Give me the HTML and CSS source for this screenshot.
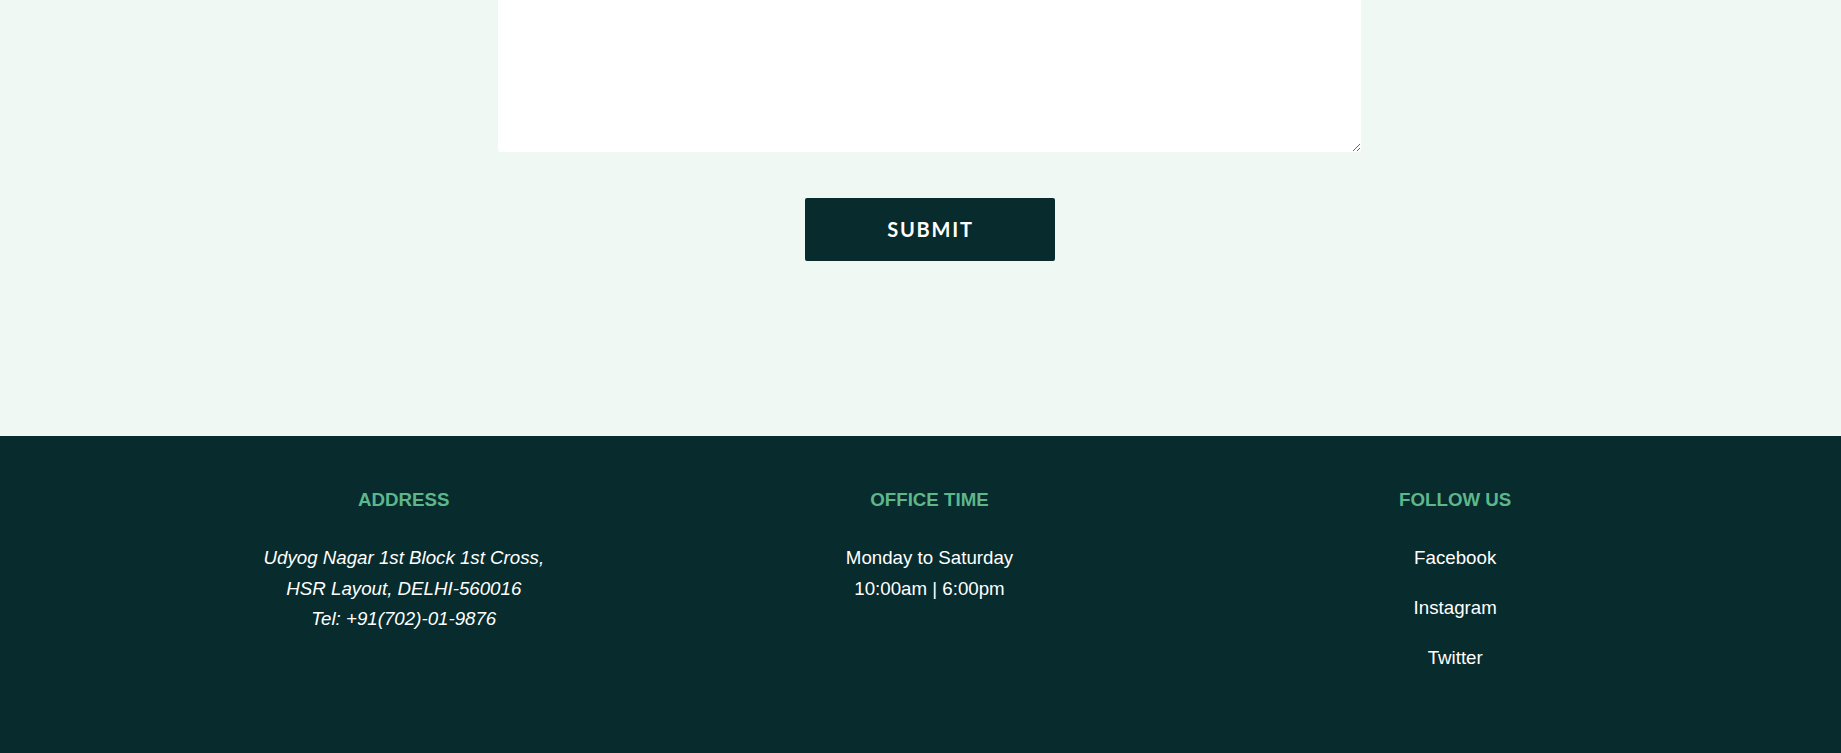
FILE: index.html
```html
<!DOCTYPE html>
<html lang="en">
<head>
<meta charset="utf-8">
<title>Contact</title>
<link rel="stylesheet" href="styles.css">
</head>
<body>
<div class="page">
  <section class="contact">
    <form class="form">
      <textarea class="message" name="message"></textarea>
      <button type="button" class="submit">SUBMIT</button>
    </form>
  </section>
  <footer class="footer">
    <div class="cols">
      <div class="col">
        <h3 class="col-title">ADDRESS</h3>
        <p class="lines address">Udyog Nagar 1st Block 1st Cross,<br>HSR Layout, DELHI-560016<br>Tel: +91(702)-01-9876</p>
      </div>
      <div class="col">
        <h3 class="col-title">OFFICE TIME</h3>
        <p class="lines">Monday to Saturday<br>10:00am | 6:00pm</p>
      </div>
      <div class="col">
        <h3 class="col-title">FOLLOW US</h3>
        <ul class="links">
          <li><a href="#" class="link">Facebook</a></li>
          <li><a href="#" class="link">Instagram</a></li>
          <li><a href="#" class="link">Twitter</a></li>
        </ul>
      </div>
    </div>
  </footer>
</div>
</body>
</html>
```

FILE: styles.css
```css
* { box-sizing: border-box; }

html, body {
  margin: 0;
  padding: 0;
  background: #082b2d;
  font-family: "Liberation Sans", Arial, sans-serif;
}

.page {
  display: flex;
  flex-direction: column;
  min-height: 100vh;
}

.contact {
  background: #eff8f3;
  padding: 0 0 175px 18px;
}

.form {
  display: flex;
  flex-direction: column;
  align-items: center;
}

.message {
  display: block;
  width: 863px;
  height: 152px;
  border: none;
  background: #ffffff;
  border-radius: 0 0 3px 3px;
  margin: 0;
  padding: 10px;
  font: 16px "Liberation Sans", Arial, sans-serif;
}

.submit {
  margin-top: 46px;
  width: 250px;
  height: 63px;
  border: none;
  border-radius: 2px;
  background: #082b2d;
  color: #ffffff;
  font-family: Lato, "Noto Sans", sans-serif;
  font-weight: 700;
  font-size: 20px;
  letter-spacing: 1.8px;
  padding: 0 0 2px 2px;
  cursor: pointer;
}

.footer {
  flex: 1;
  background: #082b2d;
  padding: 53px 0 80px 18px;
}

.cols {
  width: 1577px;
  margin: 0 auto;
  display: grid;
  grid-template-columns: repeat(3, 1fr);
  text-align: center;
}

.col-title {
  margin: 0;
  font-size: 18.72px;
  line-height: 22px;
  font-weight: 700;
  color: #5db78a;
}

.lines {
  margin: 32px 0 0;
  font-size: 18.72px;
  line-height: 30.6px;
  color: #ffffff;
}

.address { font-style: italic; }

.links {
  list-style: none;
  margin: 32px 0 0;
  padding: 0;
  display: flex;
  flex-direction: column;
  gap: 20px;
}

.link {
  color: #ffffff;
  text-decoration: none;
  font-size: 18.72px;
  line-height: 30px;
}
```
